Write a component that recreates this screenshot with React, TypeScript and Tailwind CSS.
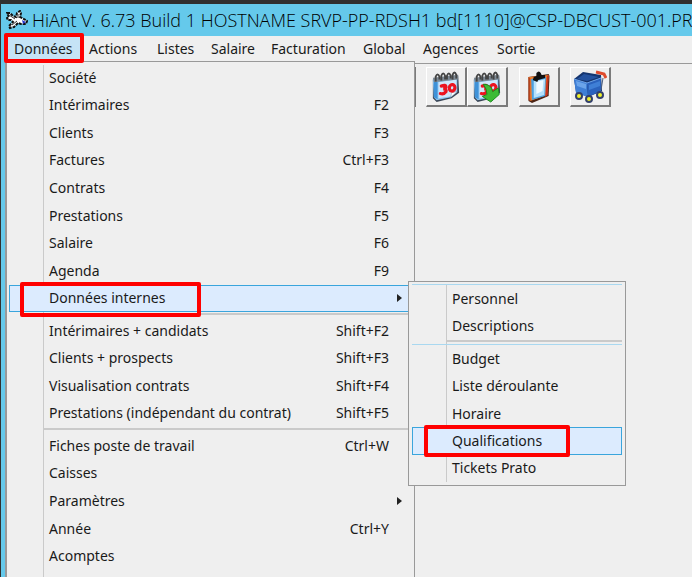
import React from "react";

type Item = { label: string; keys?: string; sub?: boolean; active?: boolean; marked?: boolean };

const bar: { label: string; width: string }[] = [
  { label: "Données", width: "w-[75px]" },
  { label: "Actions", width: "w-[68px]" },
  { label: "Listes", width: "w-[54px]" },
  { label: "Salaire", width: "w-[60px]" },
  { label: "Facturation", width: "w-[92px]" },
  { label: "Global", width: "w-[60px]" },
  { label: "Agences", width: "w-[74px]" },
  { label: "Sortie", width: "w-[60px]" },
];

const main: Item[][] = [
  [
    { label: "Société" },
    { label: "Intérimaires", keys: "F2" },
    { label: "Clients", keys: "F3" },
    { label: "Factures", keys: "Ctrl+F3" },
    { label: "Contrats", keys: "F4" },
    { label: "Prestations", keys: "F5" },
    { label: "Salaire", keys: "F6" },
    { label: "Agenda", keys: "F9" },
    { label: "Données internes", sub: true, active: true, marked: true },
  ],
  [
    { label: "Intérimaires + candidats", keys: "Shift+F2" },
    { label: "Clients + prospects", keys: "Shift+F3" },
    { label: "Visualisation contrats", keys: "Shift+F4" },
    { label: "Prestations (indépendant du contrat)", keys: "Shift+F5" },
  ],
  [
    { label: "Fiches poste de travail", keys: "Ctrl+W" },
    { label: "Caisses" },
    { label: "Paramètres", sub: true },
    { label: "Année", keys: "Ctrl+Y" },
    { label: "Acomptes" },
  ],
];
const mainHeights = ["h-[248px]", "h-[110px]", "h-[138px]"];

const internes: Item[][] = [
  [{ label: "Personnel" }, { label: "Descriptions" }],
  [
    { label: "Budget" },
    { label: "Liste déroulante" },
    { label: "Horaire" },
    { label: "Qualifications", active: true, marked: true },
    { label: "Tickets Prato" },
  ],
];
const internesHeights = ["h-[55px] border-t border-[#a9d8f0]", "h-[138px] border-t border-[#a9d8f0]"];

function Row({ item, mark }: { item: Item; mark: string }) {
  return (
    <li className="relative flex min-h-0 flex-1">
      <button
        type="button"
        className={
          "flex w-full items-center border pr-[22px] pl-[35px] text-left " +
          (item.active ? "border-[#3aa5dc] bg-[#dcebfe]" : "border-transparent")
        }
      >
        <span className="flex-1 pl-1 whitespace-nowrap">{item.label}</span>
        {item.keys && <span>{item.keys}</span>}
        {item.sub && (
          <svg className="-mr-4 h-2 w-2" viewBox="0 0 8 8" aria-hidden="true">
            <path d="M0 0L5 4L0 8Z" fill="#222" />
          </svg>
        )}
      </button>
      {item.marked && <span className={"pointer-events-none absolute rounded-xs border-4 border-[#ff0000] " + mark} />}
    </li>
  );
}

function Menu({ groups, heights, mark }: { groups: Item[][]; heights: string[]; mark: string }) {
  return (
    <>
      {groups.map((g, i) => (
        <React.Fragment key={i}>
          {i > 0 && (
            <div className="h-[5px] pt-px pl-[34px]">
              <hr className="border-t-2 border-[#cacaca]" />
            </div>
          )}
          <ul className={"flex flex-col " + heights[i]}>
            {g.map((it) => (
              <Row key={it.label} item={it} mark={mark} />
            ))}
          </ul>
        </React.Fragment>
      ))}
    </>
  );
}

function Calendar({ arrow }: { arrow?: boolean }) {
  return (
    <svg className="h-8 w-[30px]" viewBox="0 0 32 34" aria-hidden="true">
      <path d="M2 9L29 5L30 23L22 29L6 33L2 29Z" fill="#3a4656" />
      <path d="M2 9L28 6L28 22L21 28L6 31L3 28Z" fill="#8cc5f2" />
      <path d="M8 12L27 9L27 21L20 27L8 29Z" fill="#cfe7fa" />
      <path d="M3 9L7 12L7 30L3 28Z" fill="#3f92d8" />
      <path d="M21 28L22 23L28 22Z" fill="#fff" stroke="#7b93ab" strokeWidth="0.5" />
      <path d="M2 7L29 4L29 9L3 12Z" fill="#7d8994" />
      <g fill="none" stroke="#444" strokeWidth="2">
        <path d="M5 11V6Q7 1 9 6V9" />
        <path d="M11 10V5Q13 0 15 5V9" />
        <path d="M17 9V5Q19 0 21 5V8" />
        <path d="M23 9V4Q25 -1 27 4V8" />
      </g>
      <g fill="none" stroke="#ec1320" strokeWidth="3.4" strokeLinecap="round">
        <path d="M11 16Q16 14 16 17Q15 19 13 19Q17 19 16 22Q14 25 10 24" />
        <ellipse cx="22.500" cy="18" rx="3" ry="3.500" transform="rotate(12 23 18)" />
      </g>
      {arrow && (
        <path d="M12 14Q21 14 22 22L28 18L29 25L20 33L11 27L16 25Q16 19 12 14Z" fill="#3dbb35" stroke="#178a1c" />
      )}
    </svg>
  );
}

function Clipboard() {
  return (
    <svg className="h-[34px] w-[28px]" viewBox="0 0 32 34" preserveAspectRatio="none" aria-hidden="true">
      <path d="M4 7L27 4L28 6L27 26L8 33L4 31Z" fill="#4c2415" />
      <path d="M4 7L27 5L25 25L6 31Z" fill="#f07f2d" />
      <path d="M25 6L27 5L26 25L23 27Z" fill="#c9321c" />
      <path d="M4 7L6 8L6 31L4 30Z" fill="#b9441c" />
      <path d="M7 9L24 7L23 26L8 30Z" fill="#4a9fdf" />
      <path d="M10 11L23 9L22 25L10 28Z" fill="#b5e0fb" />
      <path d="M13 12L21 10L20 21L13 24Z" fill="#eff9ff" />
      <path d="M9 10L10 7L13 6L13 3Q16 0 18 3L19 5L23 5L23 8L15 10L14 12Z" fill="#111" />
    </svg>
  );
}

function Cart() {
  return (
    <svg className="h-[34px] w-[34px]" viewBox="0 0 34 34" aria-hidden="true">
      <path d="M1 9L10 2L28 5L29 21L15 27L3 22Z" fill="#15356f" />
      <path d="M1 9L14 13L15 27L3 23Z" fill="#3f7fd6" />
      <path d="M3 11L13 14L13 19L4 16Z" fill="#6ba4ea" />
      <path d="M14 13L28 8L28 21L15 27Z" fill="#2a62bd" />
      <path d="M16 15L27 11L27 16L16 20Z" fill="#3f7fd6" />
      <path d="M4 9L11 4L26 7L14 11Z" fill="#24529f" />
      <path d="M1 9L14 13L28 8" fill="none" stroke="#6da2e6" />
      <path d="M23 2L31 4L33 8" fill="none" stroke="#df4a2c" strokeWidth="3" />
      <path d="M30 8L28 20" stroke="#4a5a7a" />
      <g fill="#f0f22a" stroke="#33406a" strokeWidth="2">
        <ellipse cx="6" cy="26" rx="3" ry="3" />
        <ellipse cx="16" cy="29" rx="3" ry="3" />
        <ellipse cx="27" cy="25" rx="3" ry="3" />
      </g>
    </svg>
  );
}

function Tool({ name, children }: { name: string; children: React.ReactNode }) {
  return (
    <button
      type="button"
      aria-label={name}
      className="flex h-10 w-[41px] items-center justify-center border-t border-r-2 border-b-2 border-l border-t-white border-r-[#7b7b7b] border-b-[#7b7b7b] border-l-white bg-[#efefef]"
    >
      {children}
    </button>
  );
}

export default function App() {
  return (
    <div className="relative flex h-screen flex-col overflow-hidden border-t-4 border-l border-[#303030] bg-[#efefef] font-['Noto_Sans','Open_Sans',sans-serif] text-sm text-[#1a1a1a]">
      <header className="flex h-8 shrink-0 items-center gap-1 bg-[#65c9eb] pl-[5px] text-black">
        <svg className="h-5 w-[22px] shrink-0" viewBox="0 0 22 20" aria-hidden="true">
          <path
            d="M1 3L4 3L7 6L10 7L11 3L14 1L15 3L14 7L18 9L21 11L20 14L15 14L12 13L8 17L4 18L3 16L7 12L5 10L2 10L1 8L3 7Z"
            fill="#fff"
            stroke="#111"
            strokeWidth="2"
            strokeDasharray="3 1"
          />
          <path d="M3 5L9 9M6 15L11 11M12 4L12 8" stroke="#333" />
          <path d="M16 10L20 12L17 14Z" fill="#2233cc" />
        </svg>
        <h1 className="font-['Open_Sans','Noto_Sans',sans-serif] text-lg font-light whitespace-nowrap">
          HiAnt V. 6.73 Build 1 HOSTNAME SRVP-PP-RDSH1 bd[1110]@CSP-DBCUST-001.PR
        </h1>
      </header>
      <div className="flex min-h-0 flex-1 flex-col border-l-4 border-[#65c9eb]">
        <nav className="flex h-[27px] shrink-0 border-l border-[#999] pb-[2px]">
          {bar.map((b, i) => (
            <button
              key={b.label}
              type="button"
              className={
                "pl-2 text-left " + b.width + (i === 0 ? " bg-[#c5e3f6] outline -outline-offset-1 outline-[#66a7d8]" : "")
              }
            >
              {b.label}
            </button>
          ))}
        </nav>
        <div className="flex flex-1 items-start border-t border-l border-[#999] pt-[3px] pl-[409px]">
          <div className="mr-[10px] h-10 w-px bg-[#7b7b7b]" />
          <Tool name="Calendrier"><Calendar /></Tool>
          <Tool name="Actualiser le calendrier"><Calendar arrow /></Tool>
          <div className="w-[11px]" />
          <Tool name="Presse-papiers"><Clipboard /></Tool>
          <div className="w-[10px]" />
          <Tool name="Chariot"><Cart /></Tool>
        </div>
      </div>
      <div className="absolute top-[57px] bottom-0 left-[5px] w-[409px] border-t border-r border-l border-[#999] bg-[#efefef] px-[2px] pt-[2px]">
        <div className="absolute top-[3px] bottom-0 left-[36px] w-px bg-[#cacaca]" />
        <div className="relative">
          <Menu groups={main} heights={mainHeights} mark="-top-[3px] left-[11px] h-[35px] w-[181px]" />
        </div>
      </div>
      <div className="pointer-events-none absolute top-[29px] left-[3px] h-[30px] w-[80px] rounded-xs border-4 border-[#ff0000]" />
      <div className="absolute top-[277px] left-[407px] w-[218px] border border-[#999] bg-[#efefef] p-[3px] pt-[2px]">
        <div className="absolute top-[3px] bottom-[3px] left-[37px] w-px bg-[#cacaca]" />
        <div className="relative">
          <Menu groups={internes} heights={internesHeights} mark="-top-[2px] left-[12px] h-[32px] w-[146px]" />
        </div>
      </div>
    </div>
  );
}
